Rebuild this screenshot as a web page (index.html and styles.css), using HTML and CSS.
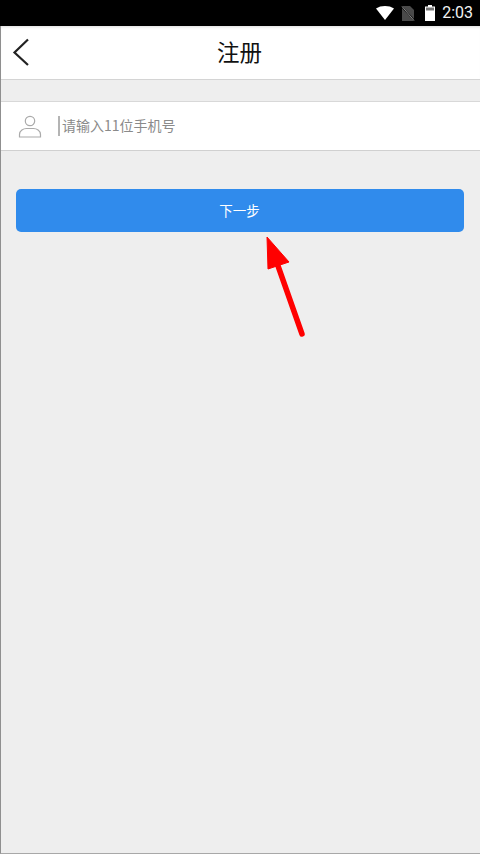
FILE: index.html
```html
<!DOCTYPE html>
<html lang="zh">
<head>
<meta charset="utf-8">
<title>注册</title>
<link rel="stylesheet" href="styles.css">
</head>
<body>
<div class="screen">
  <div class="status">
    <svg class="st-wifi" width="18" height="14" viewBox="0 0 18 14"><path d="M0 2.500C2.500.8 5.600 0 9 0s6.500.8 9 2.500L9 14z" fill="#fff"/></svg>
    <svg class="st-sim" width="14" height="15" viewBox="0 0 14 15"><path d="M1 0h8l4 4v11H1z" fill="#4a4a4a"/><path d="M0 0l14 15" stroke="#000" stroke-width="1.500"/><path d="M1 0.500l12 14" stroke="#8a8a8a" stroke-width="1"/></svg>
    <svg class="st-batt" width="10" height="16" viewBox="0 0 10 16"><path d="M3 0h4v1.500h3V16H0V1.500h3z" fill="#fff"/><path d="M1 2.500h8v3H1z" fill="#777"/></svg>
    <span class="st-time">2:03</span>
  </div>
  <header class="head">
    <svg class="back" width="18" height="28" viewBox="0 0 18 28"><path d="M16 1.500L2.500 14.500 16 27" fill="none" stroke="#222" stroke-width="2.200"/></svg>
    <h1 class="title">注册</h1>
  </header>
  <div class="row">
    <svg class="user" width="24" height="23" viewBox="0 0 24 23"><circle cx="12" cy="6" r="4.700" fill="none" stroke="#aaa" stroke-width="1.200"/><path d="M1.500 22v-2.500c0-4 4-6 7-6h7c3 0 7 2 7 6V22z" fill="none" stroke="#aaa" stroke-width="1.200"/></svg>
    <span class="caret"></span>
    <span class="hint">请输入11位手机号</span>
  </div>
  <button class="next">下一步</button>
  <svg class="arrow" width="70" height="120" viewBox="0 0 70 120"><path d="M16 7L17 39 38 32z" fill="#f00" stroke="#f00" stroke-linejoin="round"/><path d="M26 33L51 104" stroke="#f00" stroke-width="5.500" stroke-linecap="round"/></svg>
</div>
</body>
</html>
```
FILE: styles.css
```css
* { box-sizing: border-box; }
html, body { margin: 0; padding: 0; }
body { width: 480px; height: 854px; overflow: hidden; font-family: "Roboto", "Noto Sans CJK SC", sans-serif; }
.screen { position: relative; width: 480px; height: 854px; background: #eeeeee; border-left: 1px solid #8f8f8f; border-bottom: 1px solid #a8a8a8; display: flex; flex-direction: column; }
.status { height: 26px; margin-left: -1px; background: #000; display: flex; align-items: center; justify-content: flex-end; padding-right: 7px; color: #fff; }
.st-wifi { margin-right: 7px; }
.st-sim { margin-right: 10px; }
.st-batt { margin-right: 7px; }
.st-time { font-size: 16px; color: #f2f2f2; line-height: 26px; }
.head { height: 54px; background: #fff; border-bottom: 1px solid #d4d4d4; display: flex; align-items: center; justify-content: center; padding-bottom: 3px; position: relative; box-shadow: inset 0 3px 3px -2px #ddd; }
.back { position: absolute; left: 11px; top: 12px; }
.title { margin: 0 0 0 -2px; font-size: 22.500px; font-weight: 400; color: #111; font-family: "Noto Sans CJK SC", sans-serif; }
.row { height: 50px; margin-top: 21px; background: #fff; border-top: 1px solid #d8d8d8; border-bottom: 1px solid #d0d0d0; display: flex; align-items: center; padding-left: 17px; }
.user { flex: none; margin-right: 16px; }
.caret { width: 2px; height: 20px; background: #b4b4b4; margin-right: 2px; }
.hint { font-size: 14px; color: #8a8a8a; padding-bottom: 3px; font-family: "Noto Sans CJK SC", sans-serif; }
.next { display: block; width: 448px; height: 43px; margin: 38px 0 0 15px; padding: 0 1px 2px 0; border: 0; border-radius: 5px; background: #308bec; color: #fff; font-size: 13.500px; font-family: "Noto Sans CJK SC", sans-serif; }
.arrow { position: absolute; left: 250px; top: 230px; }
```
